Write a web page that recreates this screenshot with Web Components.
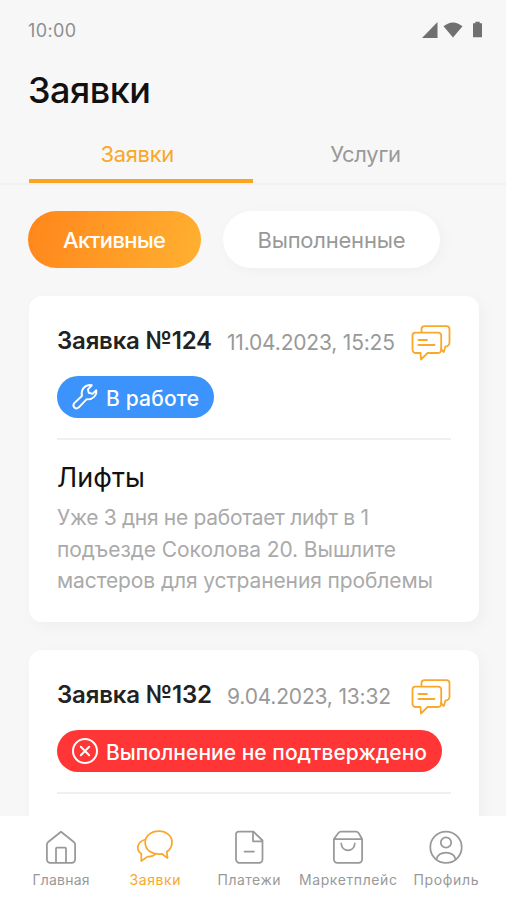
<!DOCTYPE html>
<html lang="ru">
<head>
<meta charset="utf-8">
<title>Заявки</title>
<style>
html,body{margin:0;padding:0}
body{width:506px;height:900px;overflow:hidden;background:#fff;font-family:Inter,"Liberation Sans",sans-serif}
</style>
</head>
<body>
<requests-app></requests-app>
<script>
const define = (name, html, extra) => {
  const t = document.createElement('template');
  t.innerHTML = html;
  customElements.define(name, class extends HTMLElement {
    constructor() { super(); this.attachShadow({mode: 'open'}).append(t.content.cloneNode(true)); }
    connectedCallback() { if (extra) extra(this, this.shadowRoot); }
  });
};

/* Text run tracked to fill an exact measure given in the "w" attribute. */
define('tracked-text', `<style>:host{display:block;white-space:nowrap;flex:none}span{display:inline-block}</style><span><slot></slot></span>`, (h, r) => {
  const w = +h.getAttribute('w'), s = r.querySelector('span');
  const n = h.textContent.length;
  const gap = (w - s.getBoundingClientRect().width) / (n - 1);
  s.style.letterSpacing = gap + 'px';
  s.style.marginRight = -gap + 'px';
});

const icons = {
  status: ['62','18','0 0 62 18','<g fill="#707070" stroke="none"><path d="M0 17L15.5 1V17Z"/><path d="M21.5 5.2Q31 -2.4 40.5 5.2L31 16.4Z"/><path d="M51 2.3h2.3V.8h4.4v1.5H60v14H51z"/></g>'],
  chat: ['40','36','0 0 40 36','<g stroke-width="1.8"><path d="M10.5 7.2V4.2a3 3 0 0 1 3-3H35.500a3 3 0 0 1 3 3V17.500a4 4 0 0 1-4 4L32.800 27L29.800 24"/><path d="M4.300 7.600H27.200a3 3 0 0 1 3 3V25a3 3 0 0 1-3 3H16.600L10 34.500L9.500 28H4.800a3.300 3.300 0 0 1-3.300-3.300V10.600a3 3 0 0 1 2.800-3z"/><path d="M7.500 15h8.500M7.500 20h16"/></g>'],
  wrench: ['28','28','0 0 28 28','<g stroke-width="1.9"><path d="M3 20.400L10.900 13C9.700 7.500 12.500 2.600 18.500 2L20.800 2.300L16.900 6.300L17.800 9.900L21.700 10.800L25.200 7.200C26.200 12 21.700 17 15.500 16.300L7.600 24.600C4.600 26.800 1 23.500 3 20.400Z"/></g>'],
  cross: ['28','28','0 0 28 28','<g stroke-width="2"><circle cx="14" cy="14" r="12"/><path d="M9.800 9.800l8.400 8.400M18.200 9.800l-8.400 8.400"/></g>'],
  home: ['40','40','0 0 40 40','<path d="M5.900 16.500Q5.900 15 7.200 14L20 3.700L32.800 14Q34.100 15 34.100 16.500V31.500A3.300 3.300 0 0 1 30.800 34.800H9.200A3.300 3.300 0 0 1 5.900 31.500ZM15 34.500V20.500A1 1 0 0 1 16 19.500H24A1 1 0 0 1 25 20.500V34.500"/>'],
  talk: ['40','40','0 0 40 40','<path d="M24 3.200C31.500 3.200 37 8 37 14.200C37 18.600 34.500 22 31.800 23.800L32.500 30L26.800 25.800C17 27.300 10.200 22 10.200 14.500C10.200 8 16 3.200 24 3.200Z"/><path d="M10.300 11.500C1.800 13.800 .800 21.800 6.300 25.800V33L12.500 28.600C15.500 29 18.500 28 20.500 25.700"/>'],
  doc: ['40','40','0 0 40 40','<path d="M9.500 3.700H24.500L33.500 12.500V31.500A3.300 3.300 0 0 1 30.200 34.800H10.300A3.300 3.300 0 0 1 7 31.500V6.200A2.500 2.500 0 0 1 9.500 3.700ZM24 4V13.300H33.300M15.500 23.600H25"/>'],
  bag: ['40','40','0 0 40 40','<path d="M5.900 11L10.200 5.200Q11.300 3.700 13 3.700H28Q29.700 3.700 30.800 5.200L34.100 11V31.500A3.300 3.300 0 0 1 30.800 34.800H9.200A3.300 3.300 0 0 1 5.900 31.500ZM5.900 11H34.100M13.200 15.500C14 24.500 26 24.500 26.800 15.500"/>'],
  user: ['40','40','0 0 40 40','<circle cx="20" cy="19.200" r="15.700"/><circle cx="20" cy="14.500" r="5.200"/><path d="M10.500 31.500C11.500 22.200 28.500 22.200 29.500 31.500"/>']
};
define('line-icon', `<style>:host{display:block;flex:none}svg{display:block;fill:none;stroke:currentColor;stroke-width:1.75;stroke-linecap:round;stroke-linejoin:round}</style><svg xmlns="http://www.w3.org/2000/svg"></svg>`, (h, r) => {
  const [w, ht, vb, body] = icons[h.getAttribute('name')], s = r.querySelector('svg');
  s.setAttribute('width', w); s.setAttribute('height', ht); s.setAttribute('viewBox', vb); s.innerHTML = body;
});

define('status-bar', `<style>:host{display:flex;justify-content:space-between;align-items:flex-start;padding:21px 22px 0 28px;height:40px;box-sizing:border-box;color:#8f8f8f;font-size:18px;line-height:20px}</style>
<tracked-text w="48">10:00</tracked-text><line-icon name="status"></line-icon>`);

define('tab-item', `<style>:host{display:flex;width:225px;justify-content:center;height:58px;box-sizing:border-box;padding-top:15px;color:#999;font-size:22px;line-height:28px}:host([active]){color:#faa72a;padding-right:7px;background:linear-gradient(#faa41f,#faa41f) 0 100%/100% 4px no-repeat}</style><slot></slot>`);

define('pill-button', `<style>:host{display:flex;align-items:center;justify-content:center;height:57px;border-radius:29px;background:#fff;color:#999;font-size:22px;box-shadow:3px 3px 14px rgba(0,0,0,.035)}:host([active]){background:linear-gradient(105deg,#ff861b,#ffb131);color:#fff;font-weight:500;box-shadow:none}</style><slot></slot>`);

define('status-badge', `<style>:host{display:flex;align-items:center;gap:7px;width:max-content;height:42px;box-sizing:border-box;border-radius:21px;padding:0 15px 0 14px;color:#fff;font-size:21px;font-weight:500;background:#3b93fb}:host([error]){background:#ff3635}::slotted(tracked-text){padding-top:2px}</style><slot></slot>`);

define('request-card', `<style>
:host{display:block;box-sizing:border-box;background:#fff;border-radius:13px;padding:28px 28px 0;box-shadow:4px 5px 16px rgba(0,0,0,.035)}
header{display:flex;height:39px}
.t{font-size:24px;line-height:33px;font-weight:600;color:#222;width:170px}
.d{font-size:21px;line-height:37px;color:#999;flex:1}
.i{color:#faa72a;padding-top:1px}
.badge{padding-top:13px}
hr{border:0;height:2px;background:#efefef;margin:20px 0 0}
</style>
<header><div class="t"><slot name="title"></slot></div><div class="d"><slot name="date"></slot></div><line-icon class="i" name="chat"></line-icon></header>
<div class="badge"><slot name="badge"></slot></div><hr><slot></slot>`);

define('request-text', `<style>:host{display:block;color:#aaa;font-size:21px;line-height:31.500px;padding-top:21px}h2{margin:0 0 7px;font-size:27px;line-height:34px;font-weight:400;color:#111}</style><h2><slot name="heading"></slot></h2><slot></slot>`);

define('nav-item', `<style>:host{display:flex;flex-direction:column;align-items:center;color:#999;font-size:14px;line-height:18px;gap:3px}:host([active]){color:#faa72a}</style><slot></slot>`);

define('requests-app', `<style>
:host{display:flex;flex-direction:column;width:506px;height:900px;overflow:hidden;background:#fff}
.page{height:816px;background:#f7f7f7;overflow:hidden;flex:none}
h1{margin:0;padding:28px 28px 0;height:85px;box-sizing:border-box;font-size:36px;line-height:44px;font-weight:500;color:#111}
.tabs{display:flex;padding:0 28px 0 28.500px;height:58px;border-bottom:2px solid #f1f1f1}
.pills{display:flex;gap:22px;padding:26px 28px 28px}
.cards{display:grid;gap:28px;padding:0 27px 0 29px}
nav{display:grid;grid-template-columns:94px 94px 94px 104px 92px;height:84px;box-sizing:border-box;padding:12px 14px 0;background:#fff}
</style>
<div class="page">
<status-bar></status-bar>
<h1><tracked-text w="123">Заявки</tracked-text></h1>
<div class="tabs"><tab-item active><tracked-text w="74">Заявки</tracked-text></tab-item><tab-item><tracked-text w="71">Услуги</tracked-text></tab-item></div>
<div class="pills"><pill-button active style="width:173px"><tracked-text w="103">Активные</tracked-text></pill-button><pill-button style="width:217px"><tracked-text w="148">Выполненные</tracked-text></pill-button></div>
<div class="cards">
<request-card style="height:326px"><tracked-text slot="title" w="155">Заявка №124</tracked-text><tracked-text slot="date" w="168">11.04.2023, 15:25</tracked-text>
<status-badge slot="badge"><line-icon name="wrench"></line-icon><tracked-text w="93">В работе</tracked-text></status-badge>
<request-text><tracked-text slot="heading" w="88">Лифты</tracked-text><tracked-text w="312">Уже 3 дня не работает лифт в 1</tracked-text><tracked-text w="339">подъезде Соколова 20. Вышлите</tracked-text><tracked-text w="376">мастеров для устранения проблемы</tracked-text></request-text></request-card>
<request-card style="height:326px"><tracked-text slot="title" w="155">Заявка №132</tracked-text><tracked-text slot="date" w="164">9.04.2023, 13:32</tracked-text>
<status-badge slot="badge" error><line-icon name="cross"></line-icon><tracked-text w="321">Выполнение не подтверждено</tracked-text></status-badge></request-card>
</div></div>
<nav>
<nav-item><line-icon name="home"></line-icon><tracked-text w="57">Главная</tracked-text></nav-item>
<nav-item active><line-icon name="talk"></line-icon><tracked-text w="51">Заявки</tracked-text></nav-item>
<nav-item><line-icon name="doc"></line-icon><tracked-text w="63">Платежи</tracked-text></nav-item>
<nav-item><line-icon name="bag"></line-icon><tracked-text w="98">Маркетплейс</tracked-text></nav-item>
<nav-item><line-icon name="user"></line-icon><tracked-text w="65">Профиль</tracked-text></nav-item>
</nav>`);
</script>
</body>
</html>
